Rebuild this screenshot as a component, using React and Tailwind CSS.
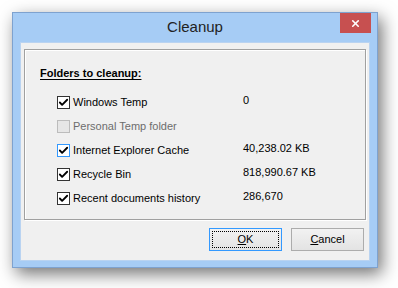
import { Check, X } from "lucide-react";

const rows = [
  { label: "Windows Temp", value: "0", checked: true },
  { label: "Personal Temp folder", value: "", checked: false, disabled: true },
  { label: "Internet Explorer Cache", value: "40,238.02 KB", checked: true, hot: true },
  { label: "Recycle Bin", value: "818,990.67 KB", checked: true },
  { label: "Recent documents history", value: "286,670", checked: true },
];

function CheckBox({ checked, disabled, hot }) {
  let cls = "border-[#333333] bg-white";
  if (disabled) cls = "border-[#bcbcbc] bg-[#e6e6e6]";
  if (hot) cls = "border-[#3399ff] bg-white";

  return (
    <div className={`flex h-[13px] w-[13px] shrink-0 items-center justify-center border ${cls}`}>
      {checked && <Check size={11} strokeWidth={4} className="text-black" />}
    </div>
  );
}

function Button({ children, focused }) {
  return (
    <button
      className={`flex h-[23px] w-[73px] items-center justify-center border bg-gradient-to-b from-[#f2f2f2] to-[#e3e3e3] p-[2px] text-[11px] text-black ${
        focused ? "border-[#3399ff]" : "border-[#acacac]"
      }`}
    >
      <span
        className={`flex h-full w-full items-center justify-center ${
          focused ? "border border-dotted border-black" : ""
        }`}
      >
        {children}
      </span>
    </button>
  );
}

export default function App() {
  return (
    <div
      className="h-[288px] w-[398px] bg-white pl-3 pt-3"
      style={{ fontFamily: '"Liberation Sans", Arial, sans-serif' }}
    >
      <div className="flex h-[256px] w-[366px] flex-col border border-[#7ea2cf] bg-[#a6ccf5] shadow-[4px_6px_16px_rgba(0,0,0,0.55)]">

        {/* Title bar */}
        <div className="relative flex h-[29px] shrink-0 items-center justify-center">
          <span className="text-[15px] text-[#222222]">Cleanup</span>
          <div className="absolute right-[6px] top-0 flex h-[20px] w-[31px] items-center justify-center bg-[#c75050]">
            <X size={11} strokeWidth={3.5} className="text-white" />
          </div>
        </div>

        {/* Client */}
        <div className="mx-[7px] mb-[6px] flex flex-1 flex-col border border-[#b9d3f1] bg-[#f0f0f0] px-[3px] pt-[6px]">

          {/* Group box */}
          <div className="h-[171px] border border-[#a0a0a0] pl-[15px] pt-[16px] text-[11px] text-black shadow-[1px_1px_0_#ffffff,inset_1px_1px_0_#ffffff]">
            <div className="h-[14px] font-bold leading-[14px] underline underline-offset-2">
              Folders to cleanup:
            </div>

            <div className="mt-[10px] pl-[17px]">
              {rows.map((r) => (
                <div key={r.label} className="grid h-6 grid-cols-[186px_auto] items-center">
                  <div className="flex items-center gap-[3px]">
                    <CheckBox checked={r.checked} disabled={r.disabled} hot={r.hot} />
                    <span className={r.disabled ? "text-[#6d6d6d]" : ""}>{r.label}</span>
                  </div>
                  <span className="pb-[4px]">{r.value}</span>
                </div>
              ))}
            </div>
          </div>

          {/* Buttons */}
          <div className="mt-[8px] flex justify-end gap-[9px] pr-[2px]">
            <Button focused>
              <span className="underline underline-offset-1">O</span>K
            </Button>
            <Button>
              <span className="underline underline-offset-1">C</span>ancel
            </Button>
          </div>
        </div>
      </div>
    </div>
  );
}
